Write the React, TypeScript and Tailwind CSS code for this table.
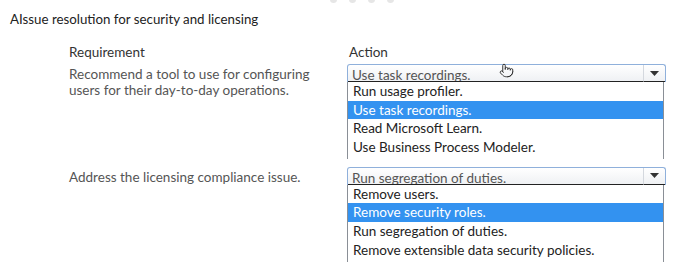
import React from 'react';
import { Pointer } from 'lucide-react';

interface Row {
  requirement: string[];
  selected: string;
  options: string[];
  highlighted: number;
  cursor?: boolean;
}

const rows: Row[] = [
  {
    requirement: ['Recommend a tool to use for configuring', 'users for their day-to-day operations.'],
    selected: 'Use task recordings.',
    options: ['Run usage profiler.', 'Use task recordings.', 'Read Microsoft Learn.', 'Use Business Process Modeler.'],
    highlighted: 1,
    cursor: true,
  },
  {
    requirement: ['Address the licensing compliance issue.'],
    selected: 'Run segregation of duties.',
    options: ['Remove users.', 'Remove security roles.', 'Run segregation of duties.', 'Remove extensible data security policies.'],
    highlighted: 1,
  },
];

function Dropdown({ row }: { row: Row }) {
  return (
    <div className="relative w-[319px]">
      {/* closed select box */}
      <div className="flex h-[18px] rounded-t-[3px] border border-b-0 border-[#8fb0db] bg-gradient-to-b from-white to-[#eef0f3]">
        <div className="flex-1 overflow-hidden border-b border-[#222] pl-[4px] text-[13.5px] leading-[20px] text-[#555]">
          {row.selected}
        </div>
        <div className="flex w-[22px] items-center justify-center border-l border-[#d4d8de] border-b border-b-[#222]">
          <svg width="9" height="5" viewBox="0 0 9 5">
            <path d="M0 0h9L4.5 5z" fill="#333" />
          </svg>
        </div>
      </div>
      {row.cursor && (
        <Pointer size={15} strokeWidth={1.6} className="absolute left-[152px] top-[-1px] text-[#333]" />
      )}
      {/* open list */}
      <div className="mr-[2px] border-x border-[#8a8f96] bg-white pb-[2px]">
        {row.options.map((opt, i) => (
          <div
            key={opt}
            className={`h-[18.7px] pl-[5px] text-[13.5px] leading-[18.7px] ${
              i === row.highlighted ? 'bg-[#3392f0] text-white' : 'text-[#222]'
            }`}
          >
            {opt}
          </div>
        ))}
      </div>
    </div>
  );
}

export default function App() {
  return (
    <div className="relative h-[272px] w-[683px] overflow-hidden bg-white font-['Lato',sans-serif]">
      {/* faint pager dots at the top edge */}
      <div className="absolute left-[330px] top-[-4px] flex gap-[12px]">
        {[0, 1, 2, 3].map((d) => (
          <div key={d} className="h-[7px] w-[7px] rounded-full bg-[#e6e6e6]" />
        ))}
      </div>

      <div className="pl-[10px] pt-[9px] text-[13.3px] leading-[20px] text-[#222]">
        AIssue resolution for security and licensing
      </div>

      <div className="mt-[14px] grid grid-cols-[278px_319px] pl-[69px]">
        <div className="text-[13.5px] leading-[18px] text-[#333]">Requirement</div>
        <div className="pl-[2px] text-[13.5px] leading-[18px] text-[#333]">Action</div>
      </div>

      <div className="mt-[3px] flex flex-col gap-[8px] pl-[69px]">
        {rows.map((row) => (
          <div key={row.selected} className="grid grid-cols-[278px_319px]">
            <div className="pt-[2px] text-[13.5px] leading-[16px] text-[#555]">
              {row.requirement.map((line) => (
                <div key={line}>{line}</div>
              ))}
            </div>
            <Dropdown row={row} />
          </div>
        ))}
      </div>
    </div>
  );
}
